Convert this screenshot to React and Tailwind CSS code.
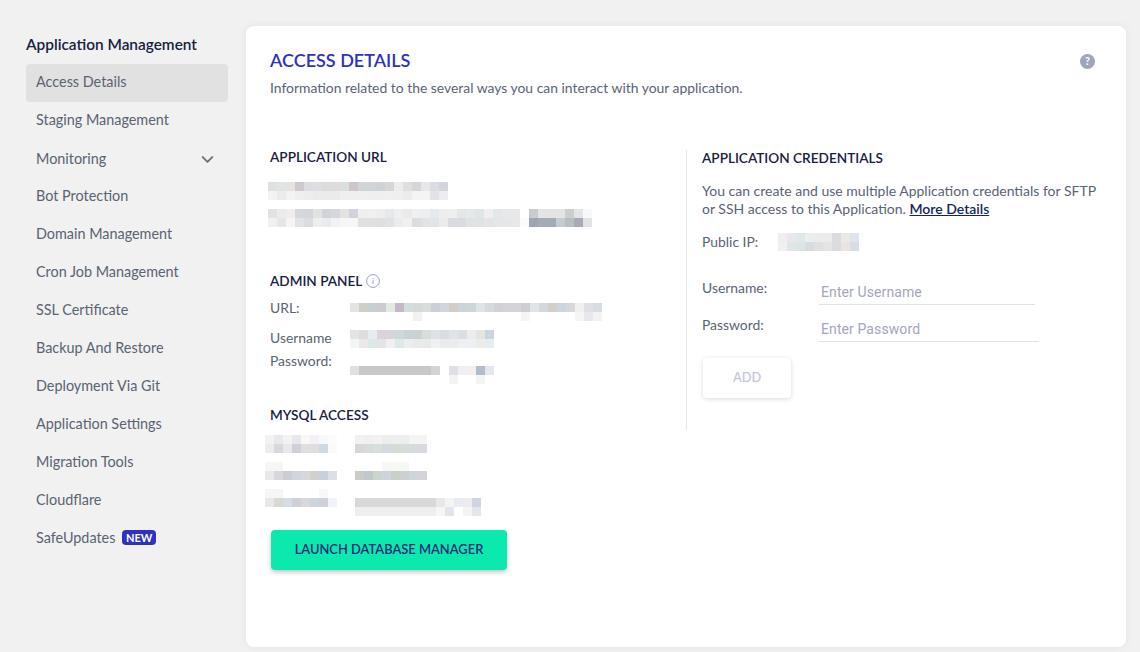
import { ChevronDown } from 'lucide-react';

const menu = ['Access Details', 'Staging Management', 'Monitoring', 'Bot Protection', 'Domain Management', 'Cron Job Management', 'SSL Certificate', 'Backup And Restore', 'Deployment Via Git', 'Application Settings', 'Migration Tools', 'Cloudflare', 'SafeUpdates'];

// redacted values in the screenshot are mosaics of 9px cells
function Mosaic({ rows, className = '' }) {
  return (
    <div className={`flex flex-col ${className}`}>
      {rows.map((row, i) => (
        <div key={i} className="flex h-[9px]">
          {row.split(' ').map((c, j) => (
            <div key={j} className="w-[9px] h-[9px]" style={{ background: `#${c}` }}></div>
          ))}
        </div>
      ))}
    </div>
  );
}

function Heading({ children, className = '' }) {
  return <h3 className={`text-[13.6px] leading-[18px] font-semibold text-[#17203f] ${className}`}>{children}</h3>;
}

export default function App() {
  return (
    <div className="flex h-[652px] overflow-hidden bg-[#f1f1f1] font-['Lato','Liberation_Sans',sans-serif] text-[13.9px] text-[#5a6373]">
      <aside className="w-[246px] shrink-0 pl-[26px] pr-[18px] pt-[35px]">
        <div className="text-[15.4px] leading-[18px] font-semibold text-[#17203f] mb-[11px]">Application Management</div>
        <ul className="text-[14.4px]">
          {menu.map((item, i) => (
            <li key={item} className={`h-[38px] pl-[10px] pr-[11px] flex items-center justify-between rounded ${i === 0 ? 'bg-[#e1e1e1]' : ''} ${i === 2 ? '' : 'pb-[2px]'}`}>
              <span className="flex items-center gap-[7px]">
                {item}
                {item === 'SafeUpdates' && <span className="rounded-[4px] bg-[#2e32bd] px-[3.5px] text-[11px] leading-[15px] font-bold text-white">NEW</span>}
              </span>
              {item === 'Monitoring' && <ChevronDown size={19} strokeWidth={2.5} className="text-[#6b7380]" />}
            </li>
          ))}
        </ul>
      </aside>

      <main className="relative w-[880px] h-[621px] mt-[26px] bg-white rounded-lg shadow-[0_0_8px_rgba(0,0,0,0.06)] pl-[24px] pt-[24px]">
        <svg viewBox="0 0 16 16" className="absolute right-[31px] top-[28px] w-[15px] h-[15px]">
          <circle cx="8" cy="8" r="8" fill="#9fa6bb" />
          <text x="8" y="12" textAnchor="middle" fontSize="11.5" fontWeight="700" fill="#fff">?</text>
        </svg>
        <h1 className="text-[18px] leading-[20px] font-semibold text-[#2e32bd]">ACCESS DETAILS</h1>
        <p className="mt-[9px] leading-[18px]">Information related to the several ways you can interact with your application.</p>

        <div className="flex mt-[53px]">
          <div className="w-[416px] shrink-0">
            <Heading className="mt-[-2px]">APPLICATION URL</Heading>
            <Mosaic className="mt-[16px] ml-[-2px]" rows={[
              'e0e0e0 dfe4e6 e4e3e1 cfc9cf dcdde3 dfdde1 d9dedd dfdddc dcdfe0 cdc6ca d0d6d6 d0d5d5 cfd2d4 d5d6d8 ececec dedfde d8d5da e7e7e8 dcdde2 d3d4de',
              'f2f2f2 ebebeb f3f3f2 efefef ededed ebebeb ebebe9 ebebeb f0eff0 f0eef0 eff0f1 eeeff0 eeeff0 f0f0ee eff0ee ebebeb f4f4f4 f4f4f4 e3e3e7 ededf0',
            ]} />
            <Mosaic className="mt-[9px] ml-[-2px]" rows={[
              'e2e2e2 ebebeb f0eeec d6d7dc d4d6dc e2e2e4 d2d3da d5d7db e3e3e3 d0d2dc efefef f0f0f0 eeeeee e7e8ea efefef eaeaea f0f0f0 eeeeee e6e9ec eeeeee efefef e4e7ea e6e8ea dfe4e7 efefef e4e7ea e8e8e8 e8e8e8 ffffff c8cccf e3e4e6 e4e4e4 e4e4e4 c9cfce e3e4e6 f7f8f9',
              'f0f0f0 e6e6e6 f5f5f5 e0e4e8 dadce0 eeeeee ebebeb eff3f5 f6f6f6 f6f6f6 e0e0e0 e0e0e0 dddfe2 e0e2e6 ebebeb eff0f1 dddddd e0e4e6 e3e4e8 ebebeb d8dce0 d8dce0 e0e3e6 e0e3e6 e4e4e4 e4e6e8 e4e6e8 e8e8e8 fafcfc a0a4ae a3acb6 a3acb6 c5cbd3 b8bfc0 a8aab5 e0e2e6',
            ]} />

            <div className="flex items-center gap-[4px] mt-[45px]">
              <Heading>ADMIN PANEL</Heading>
              <svg viewBox="0 0 14 14" className="w-[14px] h-[14px] text-[#9a9fc4]" fill="none" stroke="currentColor">
                <circle cx="7" cy="7" r="6.4" />
                <path d="M7 6.2v3.8M7 4v1.2" />
              </svg>
            </div>

            <div className="flex mt-[9px]">
              <div className="w-[80px] leading-[18px]">
                <div>URL:</div>
                <div className="mt-[12px]">Username</div>
                <div className="mt-[5px]">Password:</div>
              </div>
              <div className="pt-[4px]">
                <Mosaic rows={[
                  'e4e4e4 cfcfca c6d0d2 cdcad2 e4e9e4 c5b8c8 d5dcde d3dad9 d8dddb cdcfd6 cfd7dc d2cdc8 ccd4da cdd6d6 e0e2e4 d5dadd cfd2d6 d3d3d8 d3d3d8 ccced4 e0e4e6 d5d8d8 d0d0c8 cdd5de d8d8dc eef0f2 dfe0e6 d8dce2',
                  'ffffff ffffff ffffff ffffff ffffff ffffff ffffff f0f2f0 ffffff ffffff ffffff ffffff ffffff ffffff ffffff ffffff ffffff ffffff ffffff f5f5f5 ffffff ffffff ffffff ffffff ffffff f5f5f5 e8e8ec f2f2f2',
                ]} />
                <Mosaic className="mt-[9px]" rows={[
                  'e4e4e4 dedcdc e6ecef d8d5d8 d8d5d8 ccd8da c9d2d4 ccd2cf d8dcdc dde2e8 dcdce0 e0e4e8 dcdee4 ececec e4e4e0 c8d6dc',
                  'f4f5f5 ebe8e8 dce8e8 e4e4e8 f0f0f0 dde8e8 eaeeee e6ebeb e8eaea eef0f2 e8eaec e8ecef ecf0f2 ecf0f2 ecece8 e2eef0',
                ]} />
                <Mosaic className="mt-[18px]" rows={[
                  'e0e0e0 c8c8c8 c8c8c8 c8c8c8 c8c8c8 c8c8c8 c8c8c8 c8c8c8 c8c8c8 d4d4d4 ffffff e0e0e4 f0f0f4 f4f0f0 b4bcc8 e4e6f0',
                  'ffffff ffffff ffffff ffffff ffffff ffffff ffffff ffffff ffffff ffffff ffffff f4f4f4 ffffff ffffff f4f4f4 ffffff',
                ]} />
              </div>
            </div>

            <Heading className="mt-[22px]">MYSQL ACCESS</Heading>
            <div className="flex gap-[18px] mt-[11px] ml-[-5px]">
              <div>
                <Mosaic rows={[
                  'f2f2f2 e6e8ec f2f2f2 e8e8ec f8f8f8 f2f0f4 f8f8fa fcfcfc',
                  'ececec d8d8dc e8e8ec d0d0d8 dfdfdc e0dce0 d0d8e0 fafafa',
                ]} />
                <Mosaic className="mt-[9px]" rows={[
                  'f6f6f6 f6f6f6 ffffff ffffff ffffff ffffff ffffff ffffff',
                  'e8e8ec d8d8dc ccccd4 d0d4dc d8d8dc d0d0cc c8d0dc dce0e6',
                ]} />
                <Mosaic className="mt-[9px]" rows={[
                  'f6f6f6 f6f6f6 ffffff ffffff ffffff ffffff f8f8f8 ffffff',
                  'e8e8e8 d8d8d4 d4dce4 d0d0d8 d8d8d8 ccd4dc d0d0d8 f0f4f6',
                ]} />
              </div>
              <div>
                <Mosaic rows={[
                  'f2f2f2 f0f0f0 f2f2f2 eceeee eeeeee eaeeee f4f4f4 f4f4f4',
                  'd8d6d6 d4dcdc d8e0dc d8d8e0 d4dcd8 d8dcd8 d4dce0 dcd8e0',
                ]} />
                <Mosaic className="mt-[9px]" rows={[
                  'ffffff ffffff ffffff f6f8f6 f6f8f6 f6f8f6 ffffff ffffff',
                  'cacac6 c0c8cc ccd4d0 ccd4dc c8d0c8 ccd0d0 ccd4dc d4d4d8',
                ]} />
                <Mosaic className="mt-[18px]" rows={[
                  'd8d8d8 d8d8d8 d8d8d8 d8d8d8 d8d8d8 d8d8d8 d8d8d8 d8d8d8 d8d8d8 e8e8e8 f4f4f4 e8ecf2 ececf0 d0d4e0',
                  'eeeeee eeeeee eeeeee eeeeee eeeeee eeeeee eeeeee eeeeee eeeeee f6f6f6 e4e4ec ffffff f4f4f4 e4e6ec',
                ]} />
              </div>
            </div>

            <button className="block w-[236px] h-[40px] ml-[1px] mt-[14px] rounded bg-[#0be9ae] text-[12.9px] font-semibold text-[#1c2a7a] shadow-[0_2px_5px_rgba(0,0,0,0.25)]">LAUNCH DATABASE MANAGER</button>
          </div>

          <div className="w-[412px] h-[280px] border-l border-[#e4e4e4] pl-[15px]">
            <Heading className="-mt-[1px]">APPLICATION CREDENTIALS</Heading>
            <p className="mt-[15px] leading-[18px] text-[14px]">You can create and use multiple Application credentials for SFTP or SSH access to this Application. <a className="font-semibold text-[#14275c] underline">More Details</a></p>
            <div className="flex items-center mt-[14px]">
              <span className="w-[76px]">Public IP:</span>
              <Mosaic rows={[
                'eeeeee e8e8ec dfe8e8 eaeeee ececec ececec dcdce0 ece8e8 e0e4ec',
                'f0f0f0 e0e6e6 dce4e4 d8dce0 e0e0e4 e4e4e4 dcdce0 e8e4e0 d8dce4',
              ]} />
            </div>
            <div className="flex mt-[15px]">
              <span className="w-[117px] leading-[18px] mt-[11px]">Username:</span>
              <input placeholder="Enter Username" className="w-[216px] h-[37px] pl-[2px] pt-[12px] border-b border-[#e1e1e6] outline-none font-['Roboto',sans-serif] text-[14px] tracking-[0.1px] placeholder:text-[#a3a6bd]" />
            </div>
            <div className="flex">
              <span className="w-[117px] leading-[18px] mt-[11px]">Password:</span>
              <input placeholder="Enter Password" className="w-[220px] h-[37px] pl-[2px] pt-[12px] border-b border-[#e1e1e6] outline-none font-['Roboto',sans-serif] text-[14px] tracking-[0.1px] placeholder:text-[#a3a6bd]" />
            </div>
            <button className="block w-[88px] h-[40px] ml-[1px] mt-[16px] rounded bg-white text-[12.8px] font-semibold text-[#c8c8dc] shadow-[0_1px_5px_rgba(0,0,0,0.15)]">ADD</button>
          </div>
        </div>
      </main>
    </div>
  );
}
